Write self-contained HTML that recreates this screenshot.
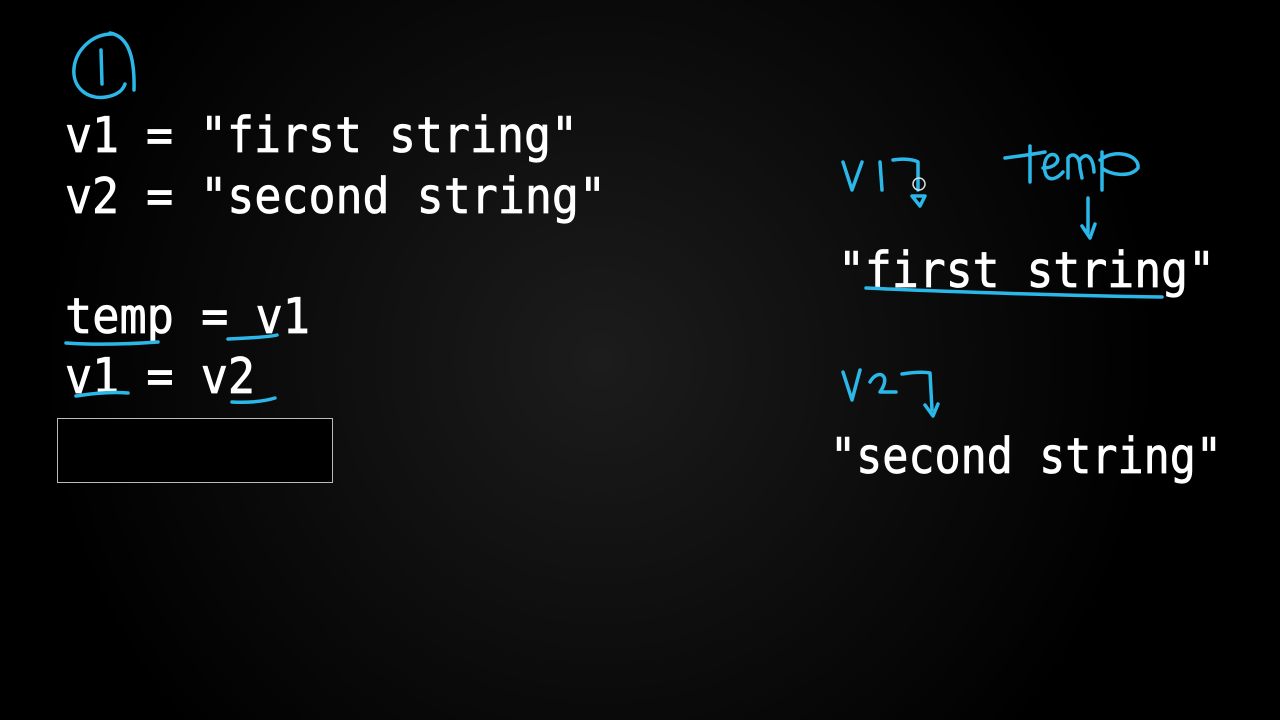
<!DOCTYPE html>
<html><head><meta charset="utf-8"><style>
html,body{margin:0;padding:0;width:1280px;height:720px;overflow:hidden;background:#000}
svg{display:block}
</style></head><body>
<svg width="1280" height="720" viewBox="0 0 1280 720" xmlns="http://www.w3.org/2000/svg">
<defs><radialGradient id="g" cx="600" cy="360" r="560" gradientUnits="userSpaceOnUse">
<stop offset="0" stop-color="#1c1c1c"/><stop offset="0.6" stop-color="#0b0b0b"/><stop offset="1" stop-color="#000"/></radialGradient></defs>
<rect width="1280" height="720" fill="url(#g)"/>
<g font-family="'DejaVu Sans Mono','Liberation Mono',monospace" font-size="49" fill="#fff" stroke="#fff" stroke-width="0.8" xml:space="preserve">
<text x="65" y="152" textLength="513" lengthAdjust="spacingAndGlyphs">v1 = "first string"</text>
<text x="65" y="213" textLength="541" lengthAdjust="spacingAndGlyphs">v2 = "second string"</text>
<text x="65" y="333" textLength="245" lengthAdjust="spacingAndGlyphs">temp = v1</text>
<text x="65" y="393" textLength="190" lengthAdjust="spacingAndGlyphs">v1 = v2</text>
<text x="838" y="287" textLength="377" lengthAdjust="spacingAndGlyphs">"first string"</text>
<text x="830" y="473" textLength="392" lengthAdjust="spacingAndGlyphs">"second string"</text>
</g>
<rect x="57.5" y="418.5" width="275" height="64" fill="#000" stroke="#bbb" stroke-width="1"/>
<g fill="none" stroke="#2bb8e8" stroke-width="3.5" stroke-linecap="round" stroke-linejoin="round">
<path d="M112 34 C92 34 76 50 74 68 C72 88 88 100 106 97 C118 95 123 90 125 84"/>
<path d="M110 33 C126 36 135 52 134 90"/>
<path d="M101 50 L102 84"/>
<path d="M66 343 C95 345 130 344 158 342"/>
<path d="M228 339 C250 338 270 337 277 335"/>
<path d="M76 396 C95 393 115 392 128 393"/>
<path d="M232 402 C250 403 265 401 275 398"/>
<path d="M866 288 C950 292 1080 296 1162 297"/>
<path d="M843 162 L852 190 L862 162"/>
<path d="M880 162 L882 190"/>
<path d="M893 160 C905 158 915 160 918 162 L918 190"/>
<path d="M912 196 L920 206 L925 196 Z"/>
<path d="M1005 158 C1020 156 1035 154 1045 152"/>
<path d="M1030 146 L1030 182"/>
<path d="M1043 168 C1055 168 1062 160 1055 155 C1046 152 1042 165 1046 175 C1050 182 1058 178 1063 172"/>
<path d="M1068 178 L1068 158 C1072 152 1080 155 1080 168 L1082 178 M1080 160 C1085 152 1093 155 1094 172"/>
<path d="M1102 152 L1102 190 M1100 160 C1115 148 1140 155 1138 168 C1130 178 1110 175 1102 168"/>
<path d="M1088 198 L1088 232 M1082 226 L1090 238 L1095 224"/>
<path d="M843 372 L852 400 L860 370"/>
<path d="M870 382 C878 368 892 375 880 392 L896 392"/>
<path d="M902 374 C915 372 925 372 930 373 L932 410"/>
<path d="M925 405 L933 416 L938 404"/>
</g>
<circle cx="919" cy="184" r="6" fill="none" stroke="#ddd" stroke-width="1.5"/>
</svg>
</body></html>
